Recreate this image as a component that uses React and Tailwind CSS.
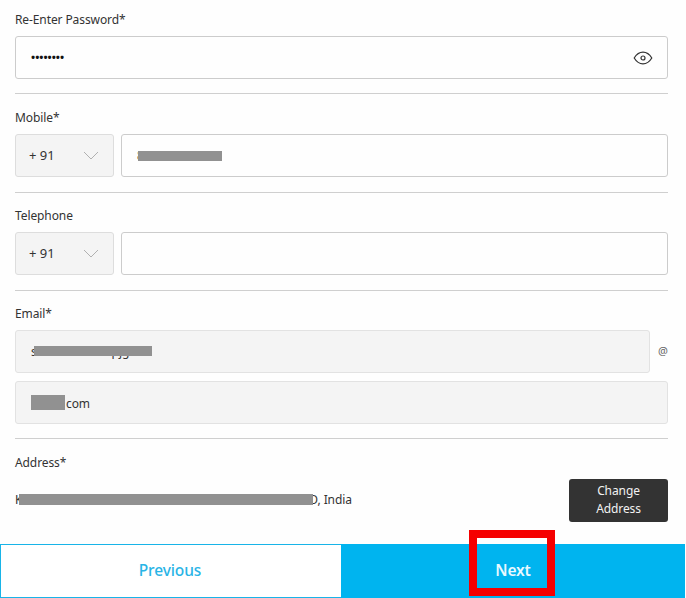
import React from "react";

function Eye() {
  return (
    <svg width="20" height="14" viewBox="0 0 20 14" fill="none" stroke="#333" strokeWidth="1.2" className="shrink-0">
      <path d="M1.2 7C3.5 3.2 6.5 1.2 10 1.2S16.5 3.2 18.8 7C16.5 10.8 13.5 12.8 10 12.8S3.5 10.8 1.2 7Z" />
      <circle cx="10" cy="7" r="2" />
    </svg>
  );
}

function Chevron() {
  return (
    <svg width="16" height="9" viewBox="0 0 16 9" fill="none" stroke="#b0b0b0" strokeWidth="1" className="shrink-0">
      <path d="M1 1L8 8L15 1" />
    </svg>
  );
}

function Label({ children, className = "" }) {
  return <div className={`h-[18px] leading-[18px] mb-[7px] ${className}`}>{children}</div>;
}

function Divider({ className = "" }) {
  return <div className={`h-px bg-[#cfcfcf] ${className}`} />;
}

function Box({ className = "", children }) {
  return (
    <div className={`h-[43px] border border-[#cccccc] rounded-[3px] flex items-center ${className}`}>
      {children}
    </div>
  );
}

function Code() {
  return (
    <Box className="w-[99px] shrink-0 bg-[#f4f4f4] pl-[13px] pr-[14px] justify-between border-[#dddddd]">
      <span className="text-[13px] tracking-normal">+ 91</span>
      <Chevron />
    </Box>
  );
}

function Bar({ className = "" }) {
  return <span className={`absolute bg-[#919191] ${className}`} />;
}

export default function App() {
  return (
    <div className="w-[686px] h-[598px] relative overflow-hidden bg-[#fefefe] text-[12px] tracking-[-0.1px] text-[#333333] font-['Noto_Sans',sans-serif]">
      <div className="pl-[15px] w-[668px]">
        <Label className="pt-0 mt-[11px]">Re-Enter Password*</Label>
        <Box className="pl-[15px] pr-[14px] justify-between">
          <span className="text-[#111111] text-[11px] tracking-normal font-bold">••••••••</span>
          <Eye />
        </Box>
        <Divider className="mt-[14px]" />

        <Label className="mt-[15px]">Mobile*</Label>
        <div className="flex gap-[7px]">
          <Code />
          <Box className="flex-1 pl-[15px] relative">
            <span>8</span>
            <Bar className="left-[16px] top-[16px] w-[84px] h-[10px]" />
          </Box>
        </div>
        <Divider className="mt-[15px]" />

        <Label className="mt-[14px]">Telephone</Label>
        <div className="flex gap-[7px]">
          <Code />
          <Box className="flex-1" />
        </div>
        <Divider className="mt-[15px]" />

        <Label className="mt-[14px]">Email*</Label>
        <div className="flex items-center">
          <Box className="w-[635px] shrink-0 bg-[#f4f4f4] border-[#e2e2e2] pl-[15px] relative">
            <span>sxxxxxxxxxxxxpjg</span>
            <Bar className="left-[18px] top-[15px] w-[118px] h-[10px]" />
          </Box>
          <span className="ml-[8px] text-[11px] text-[#666666]">@</span>
        </div>
        <Box className="mt-[8px] bg-[#f4f4f4] border-[#e2e2e2] pl-[15px]">
          <span className="inline-block w-[34px] h-[15px] bg-[#919191] mr-px" />
          <span className="pt-[2px]">com</span>
        </Box>
        <Divider className="mt-[14px]" />

        <Label className="mt-[15px]">Address*</Label>
        <div className="flex items-center justify-between">
          <span className="flex items-center pb-[2px]">
            <span>K</span>
            <span className="relative z-10 inline-block w-[294px] h-[11px] bg-[#919191] ml-[-3px]" />
            <span className="ml-[-4px]">D, India</span>
          </span>
          <button className="w-[99px] h-[43px] bg-[#333333] text-[#f2f2f2] rounded-[3px] leading-[18px] text-center pb-[2px]">
            Change
            <br />
            Address
          </button>
        </div>
      </div>

      <div className="absolute left-0 bottom-0 w-[685px] h-[54px] flex">
        <button className="w-[341px] h-full bg-white border border-r-0 border-[#18b4e8] text-[#29b4e6] text-[15.5px] font-medium pb-px pr-[2px]">
          Previous
        </button>
        <button className="flex-1 h-full bg-[#00b4ef] text-[#eaf9ff] text-[15.5px] font-semibold pb-px">
          Next
        </button>
      </div>
      <div className="absolute left-[469px] top-[530px] w-[86px] h-[66px] border-[8px] border-[#f50000]" />
    </div>
  );
}
